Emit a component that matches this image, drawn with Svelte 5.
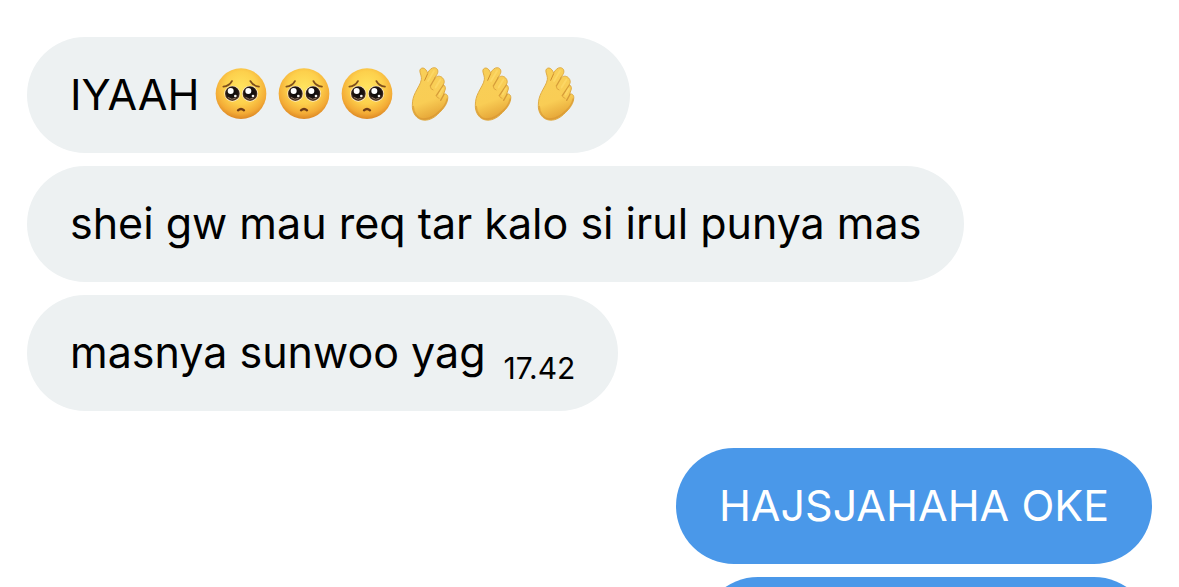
<script>
  const messages = [
    { side: 'in', text: 'IYAAH', emoji: ['face', 'face', 'face', 'hand', 'hand', 'hand'] },
    { side: 'in', text: 'shei gw mau req tar kalo si irul punya mas' },
    { side: 'in', text: 'masnya sunwoo yag', time: '17.42' },
    { side: 'out', text: 'HAJSJAHAHA OKE', first: true },
    { side: 'out', text: '' }
  ];
</script>

<svg class="defs" aria-hidden="true">
  <defs>
    <radialGradient id="skin" cx="50%" cy="38%" r="64%">
      <stop offset="0" stop-color="#ffe45f" />
      <stop offset=".5" stop-color="#fdd04c" />
      <stop offset=".8" stop-color="#f3ab36" />
      <stop offset="1" stop-color="#d98222" />
    </radialGradient>
    <linearGradient id="palm" x1="0" y1="0" x2="0.25" y2="1">
      <stop offset="0" stop-color="#f8cf58" />
      <stop offset=".7" stop-color="#f9cd55" />
      <stop offset="1" stop-color="#e7a93a" />
    </linearGradient>
    <radialGradient id="iris" cx="50%" cy="45%" r="55%">
      <stop offset="0" stop-color="#080606" />
      <stop offset=".7" stop-color="#1d1411" />
      <stop offset="1" stop-color="#68452b" />
    </radialGradient>
  </defs>
</svg>

{#snippet eye(x)}
  <circle cx={x} cy="102" r="24" fill="#fff0cf" />
  <circle cx={x} cy="102" r="22" fill="url(#iris)" />
  <circle cx={x - 5} cy="94" r="9" fill="#fff" />
  <circle cx={x + 9} cy="109" r="4" fill="#f4f1ee" />
  <path d="M{x - 12} 114q11 9 21 2" fill="none" stroke="#8b735e" stroke-width="3" stroke-linecap="round" />
{/snippet}

<main>
  {#each messages as m}
    <div class="bubble {m.side}" class:first={m.first}>
      <span>{m.text}</span>
      {#if m.emoji}
        <span class="emoji">
          {#each m.emoji as kind}
            {#if kind === 'face'}
              <svg viewBox="27 22 162 162" role="img" aria-label="pleading face">
                <circle cx="108" cy="102" r="76" fill="url(#skin)" />
                {@render eye(82)}
                {@render eye(135)}
                <path d="M55 81q18-2 26-17M136 64q8 15 26 17" fill="none" stroke="#80501c" stroke-width="5" stroke-linecap="round" />
                <path d="M99 152q9-8 18 0" fill="none" stroke="#6d3a16" stroke-width="7" stroke-linecap="round" />
              </svg>
            {:else}
              <svg viewBox="9 22 162 162" role="img" aria-label="hand with index finger and thumb crossed">
                <path
                  d="M60 37C58 29 63 25 69 25C76 26 80 33 83 40C88 31 94 24 103 24C114 25 116 36 111 44L104 55C111 48 121 48 127 54C134 61 134 68 130 75C136 78 138 86 134 94L131 103C140 101 145 108 143 118C141 136 127 151 113 164C99 177 85 183 69 181C49 179 36 158 37 137C37 122 40 111 46 99C53 84 62 73 64 60C65 51 62 46 60 37Z"
                  fill="url(#palm)" stroke="#dfab43" stroke-width="3"
                />
                <path d="M83 42L74 62" fill="none" stroke="#cf8e2d" stroke-width="3" stroke-linecap="round" />
                <path d="M105 55L91 79M130 76L109 108M132 104L122 122" fill="none" stroke="#cf9334" stroke-width="4" stroke-linecap="round" opacity=".85" />
                <path d="M91 79Q90 89 99 91M109 108Q110 115 117 116" fill="none" stroke="#dfa640" stroke-width="3" stroke-linecap="round" />
                <path d="M102 34L84 64M121 60L107 83M128 87L119 104" fill="none" stroke="#ffdf74" stroke-width="6" stroke-linecap="round" opacity=".5" />
                <path d="M40 140C40 160 54 178 70 178C86 179 104 169 119 154C132 142 139 130 141 118" fill="none" stroke="#d48f32" stroke-width="4" stroke-linecap="round" opacity=".55" />
              </svg>
            {/if}
          {/each}
        </span>
      {/if}
      {#if m.time}<time>{m.time}</time>{/if}
    </div>
  {/each}
</main>

<style>
  :global(body) {
    background: #fff;
  }
  .defs {
    position: absolute;
    width: 0;
    height: 0;
  }
  main {
    box-sizing: border-box;
    height: 100vh;
    overflow: hidden;
    padding: 37px 27px 0;
    display: flex;
    flex-direction: column;
    gap: 13px;
    font-family: Inter, 'Liberation Sans', sans-serif;
    font-size: 43px;
    line-height: 56px;
  }
  .bubble {
    box-sizing: border-box;
    flex: none;
    display: flex;
    align-items: center;
    min-height: 116px;
    padding: 29px 43px 31px;
    border-radius: 58px;
    white-space: nowrap;
  }
  .in {
    align-self: flex-start;
    background: #edf1f2;
    color: #000;
  }
  .out {
    align-self: flex-end;
    min-width: 452px;
    background: #4a98e9;
    color: #fff;
  }
  .first {
    margin-top: 24px;
  }
  .emoji {
    display: flex;
    gap: 9px;
    margin: 0 4px 0 15px;
  }
  .emoji svg {
    width: 54px;
    height: 54px;
  }
  time {
    align-self: flex-end;
    margin-left: 18px;
    font-size: 30px;
    line-height: 24px;
  }
</style>
